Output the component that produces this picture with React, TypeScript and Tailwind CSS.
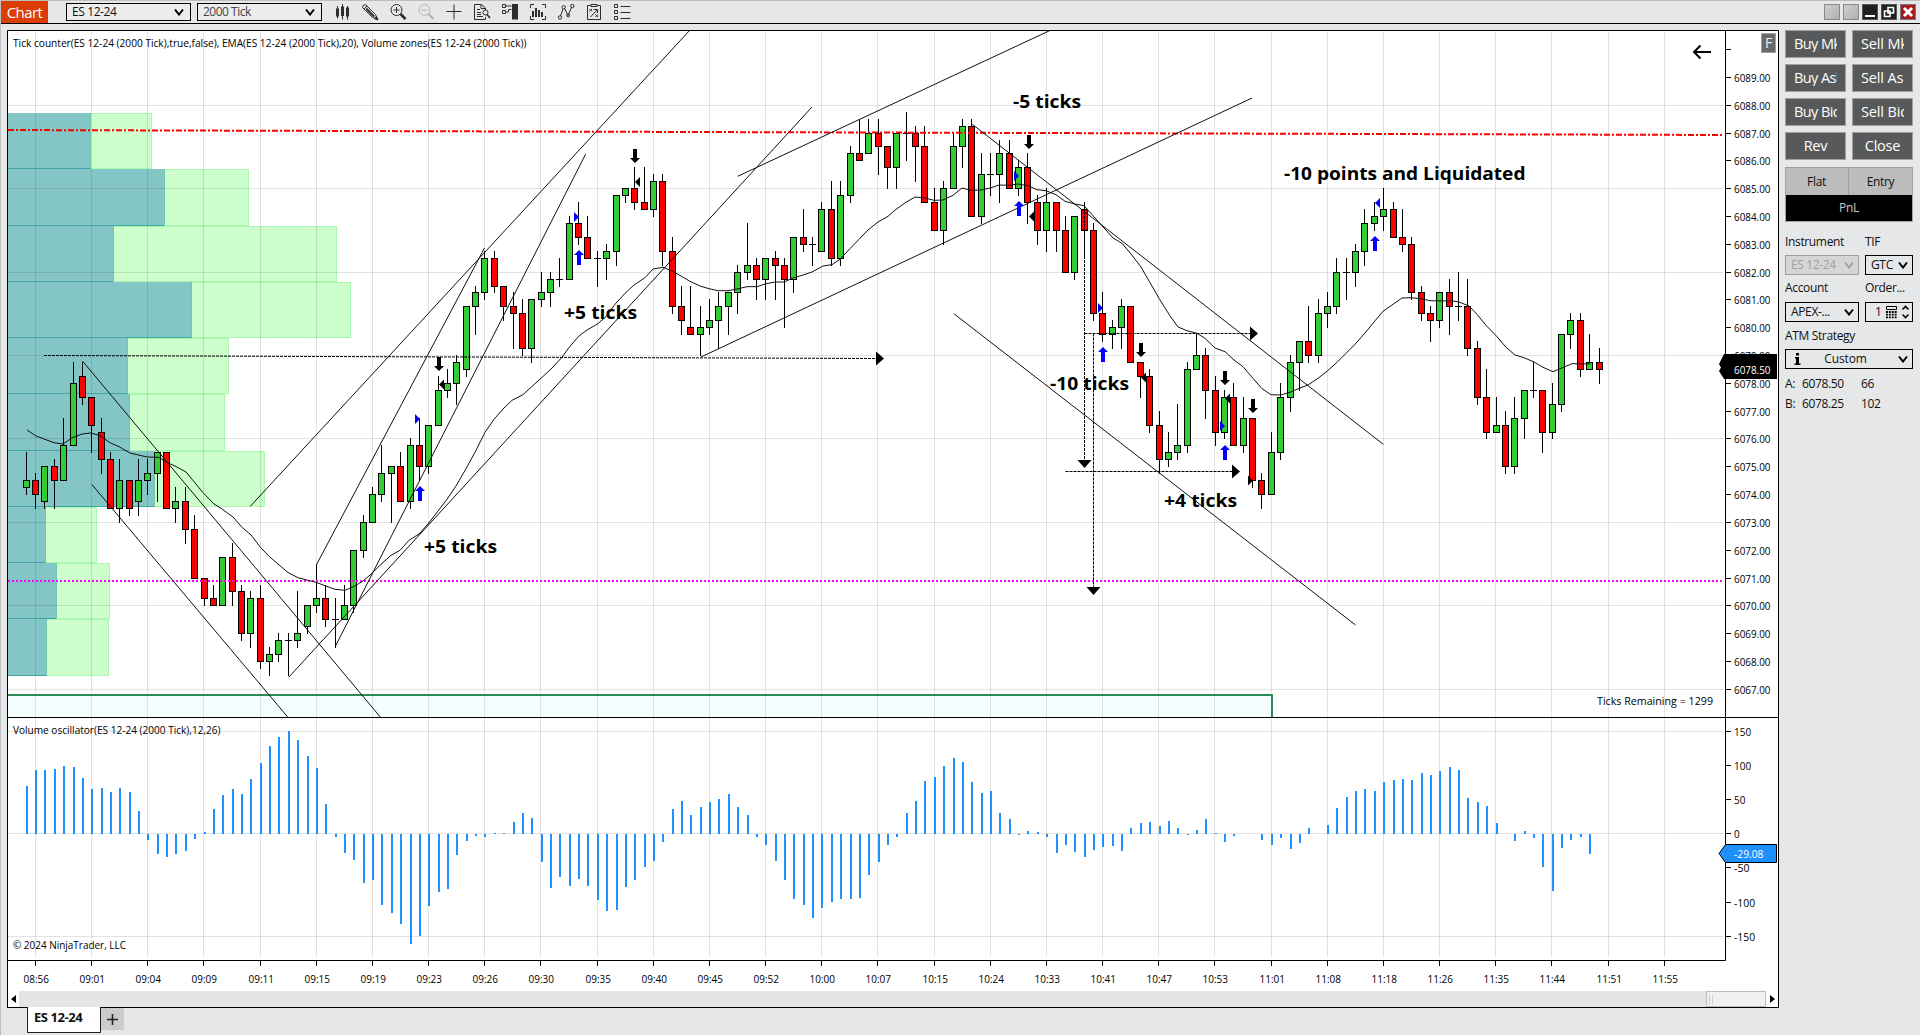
import { ReactNode } from 'react'

// [open, high, low, close] in ticks (0.25) above 6067.00
const candles = [
  [29, 34, 28, 30], [30, 31, 26, 28], [27, 32, 26, 32], [32, 33, 26, 30], [30, 39, 30, 35], [35, 47, 35, 44],
  [45, 47, 41, 42], [42, 42, 34, 38], [37, 39, 31, 33], [33, 34, 26, 26], [26, 33, 24, 30], [30, 30, 25, 26],
  [27, 33, 25, 30], [30, 33, 28, 31], [31, 34, 27, 34], [34, 34, 26, 26], [26, 29, 24, 27], [27, 29, 21, 23],
  [23, 25, 16, 16], [16, 16, 12, 13], [13, 15, 12, 12], [12, 19, 12, 19], [19, 21, 12, 14], [14, 15, 7, 8],
  [8, 14, 6, 13], [13, 15, 3, 4], [4, 6, 2, 5], [5, 8, 4, 7], [7, 8, 2, 7], [7, 14, 6, 8],
  [9, 12, 8, 12], [12, 18, 11, 13], [13, 15, 9, 10], [10, 13, 6, 10], [10, 15, 10, 12], [12, 20, 11, 20],
  [20, 25, 19, 24], [24, 29, 24, 28], [28, 35, 27, 31], [31, 32, 24, 32], [32, 34, 27, 27], [27, 36, 26, 35],
  [35, 39, 30, 32], [32, 38, 31, 38], [38, 45, 38, 43], [43, 46, 42, 44], [44, 48, 41, 47], [46, 55, 45, 55],
  [55, 58, 51, 57], [57, 63, 56, 62], [62, 63, 57, 58], [58, 58, 53, 55], [55, 57, 49, 54], [54, 56, 48, 49],
  [49, 56, 47, 56], [56, 60, 55, 57], [57, 60, 55, 59], [59, 62, 58, 59], [59, 68, 59, 67], [67, 70, 64, 65],
  [65, 68, 62, 62], [62, 63, 58, 62], [62, 64, 59, 63], [63, 71, 61, 71], [71, 72, 70, 72], [72, 75, 69, 70],
  [70, 75, 69, 69], [69, 74, 68, 73], [73, 74, 61, 63], [63, 65, 54, 55], [55, 58, 51, 53], [52, 58, 51, 51],
  [51, 55, 48, 52], [52, 56, 51, 53], [53, 57, 49, 55], [55, 57, 51, 57], [57, 61, 54, 60], [60, 67, 59, 61],
  [61, 62, 56, 59], [59, 62, 56, 62], [62, 63, 56, 61], [61, 62, 52, 59], [59, 65, 57, 65], [65, 69, 63, 64],
  [64, 65, 61, 64], [63, 70, 63, 69], [69, 73, 61, 62], [62, 73, 61, 71], [71, 78, 70, 77], [77, 82, 76, 76],
  [77, 82, 77, 80], [80, 82, 74, 78], [78, 78, 72, 75], [75, 80, 72, 80], [80, 83, 76, 80], [80, 81, 73, 78],
  [78, 81, 70, 70], [70, 72, 66, 66], [66, 73, 64, 72], [72, 80, 72, 78], [78, 82, 75, 81], [81, 82, 68, 68],
  [68, 77, 67, 74], [74, 77, 71, 74], [74, 79, 70, 77], [77, 79, 72, 72], [72, 76, 71, 75], [75, 77, 67, 70],
  [70, 71, 64, 66], [66, 72, 63, 70], [70, 70, 63, 66], [66, 68, 60, 60], [60, 68, 59, 68], [69, 70, 62, 66],
  [66, 67, 53, 54], [54, 57, 50, 51], [51, 53, 49, 52], [52, 56, 49, 55], [55, 55, 47, 47], [47, 47, 42, 45],
  [45, 46, 37, 38], [38, 40, 31, 33], [33, 37, 32, 34], [34, 41, 33, 35], [35, 47, 34, 46], [46, 51, 46, 48],
  [48, 49, 39, 43], [43, 45, 35, 37], [37, 43, 36, 42], [42, 44, 35, 35], [35, 42, 34, 39], [39, 39, 29, 30],
  [30, 31, 26, 28], [28, 37, 28, 34], [34, 44, 33, 42], [42, 48, 40, 47], [47, 50, 43, 50], [50, 55, 47, 48],
  [48, 56, 47, 54], [54, 57, 52, 55], [55, 62, 54, 60], [60, 62, 56, 60], [60, 64, 58, 63], [63, 69, 61, 67],
  [67, 70, 66, 68], [68, 72, 66, 69], [69, 70, 65, 65], [65, 69, 63, 64], [64, 65, 56, 57], [57, 58, 53, 54],
  [54, 55, 50, 53], [53, 57, 52, 57], [57, 59, 51, 55], [55, 60, 53, 55], [55, 59, 48, 49], [49, 50, 41, 42],
  [42, 46, 36, 37], [37, 42, 37, 38], [38, 40, 31, 32], [32, 42, 31, 39], [39, 43, 36, 43], [43, 47, 42, 43],
  [43, 43, 34, 37], [37, 44, 36, 41], [41, 51, 40, 51], [51, 54, 49, 53], [53, 54, 45, 46], [46, 51, 46, 47],
  [47, 49, 44, 46],
]

// oscillator bar heights, px from the zero line
const volume = [
  48, 64, 64, 65, 68, 67, 56, 45, 46, 42, 46, 42, 23, -6, -20, -23, -20, -17, -5, 2, 25, 39, 45, 40, 55, 71, 88, 97,
  103, 94, 78, 66, 30, -3, -19, -26, -49, -46, -71, -79, -90, -110, -102, -72, -58, -55, -21, -7, -2, -3, 1, 1, 12,
  21, 16, -28, -54, -43, -52, -45, -52, -66, -77, -76, -53, -46, -33, -27, -8, 25, 33, 19, 27, 32, 35, 40, 27, 19,
  -3, -11, -27, -46, -65, -71, -84, -74, -68, -65, -65, -64, -41, -28, -11, -3, 21, 33, 53, 57, 68, 76, 72, 52, 41,
  43, 21, 15, -1, 3, 2, -3, -19, -11, -18, -23, -16, -13, -12, -17, 6, 11, 12, 8, 13, 6, -1, 4, 15, 1, -8, -2, 0, 0,
  -6, -11, -4, -15, -9, 6, 0, 9, 26, 37, 43, 45, 43, 52, 54, 55, 54, 61, 59, 63, 67, 64, 36, 32, 28, 11, 0, -7, 3,
  -4, -33, -57, -14, -6, -3, -20,
]

const ema =
  '27,430 36,436 54,442.7 63,444 72,438 82,434 91,433 100,435.7 110,442.7 119,446.7 130,453 147,457 159,457.3 166,462 175,466 186,472 194,481.7 203,492.7 214,504 222,509 233,517 242,527.3 251,535 260,546.7 269,556.3 278,564 288,572.5 298,577.7 316,582.3 325,585.7 335,589.3 345,590.3 353,587 363,581 372,573.3 381,564.3 391,555.3 400,550.3 409,540.3 419,534 428,524 438,511 447,499.3 456,486 466,468.7 475,452.3 485,432.3 494,419.3 503,409 512,400.3 523,394.7 531,387.3 541,378.3 550,370 562,357.3 569,347.5 579,336 587,330 597,324.3 606,316.7 615,304.3 625,293.3 634,285 645,277.7 653,269 663,267.3 672,271 681,276 690,281.3 700,286 709,288.7 718,290.7 728,290.7 737,289 747,286.7 757,286.7 765,284 775,282 784,282 793,278 803,275 812,272 823,266 832,264.7 840,259.3 850,248.6 859,239.3 868,230 878,222 888,216.3 896,209.3 906,202.3 915,197 925,198 934,200.3 943,200 953,195.3 962,188 971,190.3 981,190 990,188 999,185 1009,185.3 1018,184 1028,185.7 1037,189.7 1046,190.7 1056,194.7 1065,201.3 1075,204 1084,205.7 1093,215.7 1102,225.7 1113,238 1122,243.3 1131,254 1141,267 1150,282.7 1159,298.3 1169,314.3 1178,327 1187,330.7 1197,333.3 1205,338.3 1215,348 1225,351.7 1234,360 1243,366.7 1253,378.3 1262,388.7 1271,394.7 1281,395 1290,392.3 1300,388 1308,385 1318,378.3 1327,371.3 1337,362.3 1346,353.3 1355,344.3 1365,333 1374,322 1383,311.3 1393,304.3 1402,298 1411,297.7 1421,298.7 1430,300.7 1453,301 1459,302 1469,306 1477,314.3 1486,325.3 1497,336.7 1506,347.3 1515,355 1524,357.7 1534,362 1543,367.3 1553,371.7 1561,368.3 1572,363.7 1590,364'

const times = [
  '08:56', '09:01', '09:04', '09:09', '09:11', '09:15', '09:19', '09:23', '09:26', '09:30', '09:35', '09:40', '09:45',
  '09:52', '10:00', '10:07', '10:15', '10:24', '10:33', '10:41', '10:47', '10:53', '11:01', '11:08', '11:18', '11:26',
  '11:35', '11:44', '11:51', '11:55',
]

// right edges of the two halves of each volume zone
const zones = [
  [91, 152], [165, 249], [114, 337], [192, 351], [128, 229], [130, 225], [155, 265], [46, 97], [57, 110], [47, 109],
]

const trendLines = [
  [82.7, 361.3, 380.3, 717],
  [91.7, 484.3, 287.7, 717],
  [250.3, 506.3, 690, 30],
  [316.3, 565, 484.5, 248],
  [335.5, 646, 585.7, 154],
  [288.7, 677.3, 812, 107],
  [737.7, 176.3, 1051, 30],
  [701, 357, 1252, 98],
  [972.3, 124.3, 1383.3, 444.3],
  [954, 313.8, 1355.5, 625],
]

const notes: [string, number, number, number][] = [
  ['+5 ticks', 424, 552.5, 73],
  ['+5 ticks', 564, 319, 73],
  ['-5 ticks', 1013, 108.3, 68],
  ['-10 ticks', 1050, 389.5, 79],
  ['+4 ticks', 1164, 507, 73],
  ['-10 points and Liquidated', 1284, 179.5, 241.5],
]

const upArrows = [[420, 486], [579, 250], [1019, 201], [1103, 347], [1225, 445], [1375, 236]]
const downArrows = [[439, 371], [635, 163], [1029, 149], [1141, 357], [1225, 385], [1253, 413]]

// x of the vertical edge, y of the tip, direction, color
const fills: [number, number, number, string][] = [
  [415, 419, 5, '#00f'], [574, 217, 5, '#00f'], [1014, 176, 5, '#00f'], [1098, 308, 5, '#00f'], [1220, 426, 5, '#00f'],
  [1380, 203, -5, '#00f'], [444, 384.5, -5, '#000'], [640, 182, -5, '#000'], [1034, 216.5, -5, '#000'],
  [1146, 377.5, -5, '#000'], [1230, 398.5, -5, '#000'], [1248, 480.5, 5, '#000'],
]

const barX = (n: number) => Math.floor(26.2 + n * 9.362)
const gridX = (i: number) => Math.floor(35.4 + i * 56.17) + 0.5
const tickY = (t: number) => Math.floor(689.3 - t * 6.953) + 0.5

function Fit({ x, y, w, children, size = 11, fill = '#000', bold = false }: { x: number, y: number, w: number, children: ReactNode, size?: number, fill?: string, bold?: boolean }) {
  return (
    <text x={x} y={y} textLength={w} lengthAdjust="spacingAndGlyphs" fontSize={size} fill={fill} fontWeight={bold ? 700 : 400}>{children}</text>
  )
}

function Candle({ n, data }: { n: number, data: number[] }) {
  const [o, h, l, c] = data
  const x = barX(n) + 0.5
  const top = tickY(Math.max(o, c))
  const bottom = tickY(Math.min(o, c))
  return (
    <g stroke="#000">
      <line x1={x} x2={x} y1={tickY(h) - 0.5} y2={tickY(l) + 0.5} />
      {o === c
        ? <line x1={x - 3.5} x2={x + 3.5} y1={top} y2={top} />
        : <rect x={x - 3} y={top} width={6} height={bottom - top} fill={c > o ? '#32cd32' : '#f00'} />}
    </g>
  )
}

function Chart() {
  return (
    <svg width={1772} height={961} viewBox="7 30 1772 961" className="block" fontFamily='"Open Sans", "Noto Sans", sans-serif'>
      <rect x={7} y={30} width={1772} height={961} fill="#fff" />

      {zones.map(([a, b], i) => {
        const y = Math.round(113.2 + i * 56.25)
        const h = Math.round(113.2 + (i + 1) * 56.25) - y
        return (
          <g key={i}>
            <rect x={8} y={y} width={a - 8} height={h} fill="#84c6c6" />
            <rect x={a} y={y} width={b - a} height={h} fill="#ccffcc" />
            <path d={`M${a} ${y + 0.5}H${b - 0.5}V${y + h - 0.5}H${a}`} fill="none" stroke="#aaf7ae" />
            <path d={`M8 ${y + h - 0.5}H${a}`} stroke="#3fa6a8" />
            <path d={`M${a - 0.5} ${y}V${y + h}`} stroke="#6fc9a8" />
          </g>
        )
      })}

      <rect x={8} y={695} width={1264} height={22} fill="#f3ffff" />
      <g stroke="#000" strokeOpacity={0.11}>
        {times.map((t, i) => <line key={t} x1={gridX(i)} x2={gridX(i)} y1={31} y2={957} />)}
        {[0, 12, 24, 36, 48, 60, 72, 84].map((t) => <line key={t} x1={8} x2={1724} y1={tickY(t)} y2={tickY(t)} />)}
        {[731.5, 833.5, 936.5].map((y) => <line key={y} x1={8} x2={1724} y1={y} y2={y} />)}
      </g>
      <path d="M8 695H1272V717" fill="none" stroke="#2e8b57" strokeWidth={2} />

      {candles.map((c, i) => <Candle key={i} n={i} data={c} />)}

      <line x1={8} y1={130} x2={1722} y2={135} stroke="#f00" strokeWidth={2} strokeDasharray="6 2 2 2" />
      <line x1={8} y1={581} x2={1722} y2={581} stroke="#f0f" strokeWidth={2} strokeDasharray="2 2" />

      <g stroke="#111" fill="none">
        <polyline points={ema} />
        {trendLines.map(([x1, y1, x2, y2], i) => <line key={i} x1={x1} y1={y1} x2={x2} y2={y2} />)}
      </g>
      <g stroke="#000" strokeDasharray="3 1">
        <line x1={44} y1={355.5} x2={876} y2={358.5} />
        <line x1={1084.5} y1={333.5} x2={1250} y2={333.5} />
        <line x1={1065.5} y1={471.5} x2={1232} y2={471.5} />
        <line x1={1084.5} y1={208} x2={1084.5} y2={460} />
        <line x1={1093.5} y1={333.5} x2={1093.5} y2={587} />
      </g>
      <path d="M876 351.5l8 7-8 7zM1250 326.5l8 7-8 7zM1232 464.5l8 7-8 7zM1077.5 460h14l-7 8zM1086.5 587h14l-7 8z" />

      {fills.map(([x, y, d, color], i) => <path key={i} d={`M${x} ${y - 5}l${d} 5l${-d} 5z`} fill={color} />)}
      {upArrows.map(([x, y], i) => <path key={i} d={`M${x} ${y}l5 5h-3v10h-4v-10h-3z`} fill="#00f" />)}
      {downArrows.map(([x, y], i) => <path key={i} d={`M${x} ${y}l5 -5h-3v-9h-4v9h-3z`} />)}

      {volume.map((v, i) => v !== 0 && (
        <rect key={i} x={barX(i)} y={v > 0 ? 834 - v : 834} width={2} height={Math.abs(v)} fill="#1e90ff" />
      ))}

      {notes.map(([text, x, y, w], i) => <Fit key={i} x={x} y={y} w={w} size={17.5} bold>{text}</Fit>)}
      <Fit x={13} y={47} w={513.5}>Tick counter(ES 12-24 (2000 Tick),true,false), EMA(ES 12-24 (2000 Tick),20), Volume zones(ES 12-24 (2000 Tick))</Fit>
      <Fit x={13} y={733.5} w={207.5}>Volume oscillator(ES 12-24 (2000 Tick),12,26)</Fit>
      <Fit x={13} y={948.5} w={113}>© 2024 NinjaTrader, LLC</Fit>
      <Fit x={1597} y={705} w={116}>Ticks Remaining = 1299</Fit>
      <path d="M1694 52H1711M1700.5 45.5L1694 52l6.5 6.5" fill="none" stroke="#000" strokeWidth={2} />

      {/* axes */}
      <path d="M7.5 991V30.5H1778.5V991M7 717.5H1778M7 960.5H1725.5V30" fill="none" stroke="#000" />
      {times.map((t, i) => (
        <g key={t}>
          <line x1={gridX(i)} x2={gridX(i)} y1={961} y2={966} stroke="#000" />
          <Fit x={gridX(i) - 12} y={983} w={25.5}>{t}</Fit>
        </g>
      ))}
      <line x1={1726} x2={1731} y1={49.5} y2={49.5} stroke="#000" />
      {Array.from({ length: 23 }, (_, i) => (
        <g key={i}>
          <line x1={1726} x2={1731} y1={tickY(i * 4)} y2={tickY(i * 4)} stroke="#000" />
          <Fit x={1734} y={tickY(i * 4) + 4} w={36.5}>{(6067 + i).toFixed(2)}</Fit>
        </g>
      ))}
      {[150, 100, 50, 0, -50, -100, -150].map((v) => {
        const y = Math.floor(833.8 - v * 0.683) + 0.5
        return (
          <g key={v}>
            <line x1={1726} x2={1731} y1={y} y2={y} stroke="#000" />
            <Fit x={1734} y={y + 4} w={String(Math.abs(v)).length * 5.7 + (v < 0 ? 4 : 0)}>{v}</Fit>
          </g>
        )
      })}

      <path d="M1724 354H1777V379H1724L1719 371l2-3.5-2-3.5z" />
      <Fit x={1734} y={374} w={36.5} fill="#fff">6078.50</Fit>
      <path d="M1725.5 844.5H1776.5V862.5H1725.5L1719 853.5z" fill="#1e90ff" stroke="#000" />
      <Fit x={1734} y={858} w={29.5} fill="#fff">-29.08</Fit>

      <rect x={1761.5} y={33.5} width={14} height={19} fill="#696969" stroke="#a0a0a0" />
      <text x={1765} y={48} fontSize={14} fill="#eee">F</text>
    </svg>
  )
}

function Icon({ children, color = '#2d2d2d' }: { children: ReactNode, color?: string }) {
  return <svg width={28} height={20} viewBox="0 0 28 20" fill="none" stroke={color}>{children}</svg>
}

function Chevron({ color = '#000' }: { color?: string }) {
  return (
    <svg width={10} height={8} viewBox="0 0 10 8" className="shrink-0">
      <path d="M1 1.5L5 6.5L9 1.5" fill="none" stroke={color} strokeWidth={2} />
    </svg>
  )
}

function Toolbar() {
  return (
    <div className="flex h-6 items-start border-t border-b border-t-[#bdbec0] border-b-black">
      <div className="flex h-[22px] w-[47px] items-center justify-center bg-[#dc3c05] text-[15px] tracking-[-0.55px] text-white">Chart</div>
      <div className="mt-[2px] ml-[18px] flex h-[18px] w-[125px] items-center justify-between border border-black bg-[#ececec] pr-1.5 pl-[5px] text-[12px] tracking-[-0.4px]">ES 12-24<Chevron /></div>
      <div className="mt-[2px] ml-[6px] flex h-[18px] w-[125px] items-center justify-between border border-black bg-[#ececec] pr-1.5 pl-[5px] text-[12px] tracking-[-0.5px] text-[#44444c]">2000 Tick<Chevron /></div>
      <div className="mt-px ml-[6px] flex">
        <Icon>
          <path d="M9.5 4v12.5M14.5 2v15.5M19.5 4v13.5" />
          <path d="M9.5 6.5v8M14.5 4.5v9.5M19.5 5.5v9" strokeWidth={3} />
        </Icon>
        <Icon>
          <path d="M7 3.5L9.5 2.5L19.5 12.5L21.5 17.5L16.5 15.5L6.5 5.5zM8 7L11 4M10 5.5L18.5 14.5" />
          <path d="M10.5 7L18 14.5" strokeWidth={2} />
          <path d="M22 18l-3.5-1.5 2-2z" fill="#2d2d2d" />
        </Icon>
        <Icon>
          <circle cx={12.5} cy={8} r={5.5} />
          <path d="M9.5 8h6M12.5 5v6" />
          <path d="M16.5 12l5 5" strokeWidth={2.6} />
        </Icon>
        <Icon color="#b4b4b4">
          <circle cx={12.5} cy={8} r={5.5} />
          <path d="M9.5 8h6" />
          <path d="M16.5 12l5 5" strokeWidth={2.2} />
        </Icon>
        <Icon><path d="M6.5 9.5h15M14 2.5v15" /></Icon>
        <Icon>
          <path d="M17.5 8V6L13.5 2.5H6.5V17.5H17.5V15M13 2.5V6.5H17.5M9 7.5h3M9 10.5h4M9 12.5h4M9 14.5h6" />
          <circle cx={17.5} cy={10.5} r={2.5} />
          <path d="M19 12.5l3 3.5" strokeWidth={1.6} />
        </Icon>
        <Icon>
          <path d="M6.5 2.5h3v3h-3zM6.5 8.5h3v3h-3zM9.5 4h6M9.5 10h3V7.5h3" />
          <path d="M16 2h6v15.5h-6z" fill="#2d2d2d" stroke="none" />
        </Icon>
        <Icon>
          <path d="M10 2.5H6.5V6M18 2.5H21.5V6M10 17.5H6.5V14M18 17.5H21.5V14" />
          <path d="M9 9v6M12 6v9M15 8v7M18 10v5" strokeWidth={2} />
        </Icon>
        <Icon>
          <path d="M8.5 14L11 7M12.5 6.5L16 13.5L19.5 5.5" />
          <circle cx={8} cy={15.5} r={1.7} />
          <circle cx={11.7} cy={5.3} r={1.7} />
          <circle cx={16.2} cy={13.5} r={1.5} />
          <circle cx={20.3} cy={4} r={1.7} />
        </Icon>
        <Icon>
          <path d="M11 3.5H7.5V17.5H20.5V3.5H17M11 2.5h6v2h-6z" />
          <path d="M9.5 7l2.5 2.5M12 7l-2.5 2.5M15.5 12.5l2.5 2.5M18 12.5l-2.5 2.5M10.5 15l6.5-7M13.5 7.5H17.5V11" />
        </Icon>
        <Icon>
          <path d="M6.5 2.5h3v3h-3zM6.5 8.5h3v3h-3zM6.5 14.5h3v3h-3zM12.5 4.5h10M12.5 10.5h10M12.5 16.5h10" />
        </Icon>
      </div>
      <div className="mt-[3px] mr-1 ml-auto flex gap-[3px]">
        <div className="size-4 border border-[#8a8a8a] bg-linear-to-br from-[#cfcfcf] to-[#b0b0b0]" />
        <div className="size-4 border border-[#8a8a8a] bg-linear-to-br from-[#cfcfcf] to-[#b0b0b0]" />
        <div className="size-4 border border-[#555] bg-[#231f20]">
          <svg width={14} height={14}><path d="M2 11h10" stroke="#fff" strokeWidth={2} /></svg>
        </div>
        <div className="size-4 border border-[#555] bg-[#231f20]">
          <svg width={14} height={14} fill="#231f20" stroke="#fff" strokeWidth={1.6}><path d="M6 2.5h5.5v5.5H6zM2.5 6h5.5v5.5H2.5z" /></svg>
        </div>
        <div className="size-4 border border-[#777] bg-[#a5191f]">
          <svg width={14} height={14}><path d="M3 3l8 8M11 3l-8 8" stroke="#fff" strokeWidth={3} /></svg>
        </div>
      </div>
    </div>
  )
}

// long captions are cut by the button's padding
function OrderButton({ children, clip = '' }: { children: ReactNode, clip?: string }) {
  return (
    <div className="flex h-7 w-[61px] items-center border border-[#a0a0a0] bg-[#58595b] px-[8px] text-[14.5px] text-white">
      <div className={clip ? `overflow-hidden whitespace-nowrap ${clip}` : 'w-full text-center tracking-[-0.2px]'}>{children}</div>
    </div>
  )
}

const buyClip = 'w-[43px] tracking-[-0.6px]'
const sellClip = 'w-[43px] tracking-[-0.15px]'
const selectClass = 'flex h-5 items-center justify-between border border-black pr-1 pl-[5px]'

function OrderPanel() {
  return (
    <div className="mt-[6px] ml-[6px] w-32 text-[12px] leading-4 tracking-[-0.35px] text-[#111]">
      <div className="grid grid-cols-2 gap-x-[6px] gap-y-[6px]">
        <OrderButton clip={buyClip}>Buy Mkt</OrderButton>
        <OrderButton clip={sellClip}>Sell Mkt</OrderButton>
        <OrderButton clip={buyClip}>Buy Ask</OrderButton>
        <OrderButton clip={sellClip}>Sell Ask</OrderButton>
        <OrderButton clip={buyClip}>Buy Bid</OrderButton>
        <OrderButton clip={sellClip}>Sell Bid</OrderButton>
        <OrderButton>Rev</OrderButton>
        <OrderButton>Close</OrderButton>
      </div>
      <div className="mt-[7px] border border-[#a0a0a0] text-center">
        <div className="flex h-[27px] items-center bg-[#bcbcbc]">
          <div className="flex h-full w-[63px] items-center justify-center border-r border-[#a0a0a0] pr-px">Flat</div>
          <div className="flex-1">Entry</div>
        </div>
        <div className="flex h-[26px] items-center justify-center bg-black text-[#ccc]">PnL</div>
      </div>

      <div className="mt-3 flex">
        <div className="w-20">Instrument</div>
        <div>TIF</div>
      </div>
      <div className="mt-[5px] flex justify-between">
        <div className="flex h-5 w-[74px] items-center justify-between border border-[#a0a0a0] bg-[#d6d6d6] pr-1 pl-[5px] text-[#a0a0a0]">ES 12-24<Chevron color="#a0a0a0" /></div>
        <div className={`${selectClass} w-12`}>GTC<Chevron /></div>
      </div>
      <div className="mt-[5px] flex">
        <div className="w-20">Account</div>
        <div>Order...</div>
      </div>
      <div className="mt-[6px] flex justify-between">
        <div className={`${selectClass} w-[74px]`}>APEX-...<Chevron /></div>
        <div className="flex h-5 w-12 items-center justify-between border border-black pr-[2px] pl-[9px]">
          1
          <svg width={25} height={14} viewBox="0 0 25 14">
            <path d="M1.5 1.5h10v3h-10z" fill="none" stroke="#000" />
            <path d="M1 7h11M1 9.7h11M1 12.4h11" stroke="#000" strokeWidth={1.8} strokeDasharray="1.9 1" />
            <path d="M17.5 4.5l3-3 3 3M17.5 9.5l3 3 3-3" fill="none" stroke="#000" strokeWidth={1.6} />
          </svg>
        </div>
      </div>
      <div className="mt-[6px]">ATM Strategy</div>
      <div className="mt-[5px] flex h-5 items-center border border-black pr-1 pl-2">
        <svg width={7} height={12} viewBox="0 0 7 12"><path d="M2 0h3v2.4H2zM1 4h4v6.5h1.5V12H.5v-1.5H2v-5H1z" /></svg>
        <span className="flex-1 pr-2 text-center tracking-[-0.1px]">Custom</span>
        <Chevron />
      </div>
      <div className="mt-[7px] flex h-5">
        <div className="w-[17px]">A:</div>
        <div className="w-[59px]">6078.50</div>
        <div>66</div>
      </div>
      <div className="flex h-5">
        <div className="w-[17px]">B:</div>
        <div className="w-[59px]">6078.25</div>
        <div>102</div>
      </div>
    </div>
  )
}

export default function App() {
  return (
    <div className="h-[1035px] w-[1920px] overflow-hidden border-l border-[#bdbec0] bg-[#e6e7e8] font-['Open_Sans','Noto_Sans',sans-serif] text-[#111]">
      <Toolbar />
      <div className="flex">
        <div className="mt-[6px] ml-[6px] w-[1772px]">
          <Chart />
          <div className="flex h-[17px] items-stretch border-x border-b border-black bg-[#e5e5e5]">
            <div className="flex w-[11px] items-center justify-center bg-white">
              <svg width={5} height={8}><path d="M5 0v8L0 4z" /></svg>
            </div>
            <div className="ml-auto flex w-[60px] items-center gap-[2px] border border-[#bcbcbc] bg-[#f1f1f1] pl-[2px]">
              <div className="h-2.5 w-px bg-[#d0d0d0]" />
              <div className="h-2.5 w-px bg-[#d0d0d0]" />
            </div>
            <div className="flex w-[12px] items-center justify-center bg-white">
              <svg width={5} height={8}><path d="M0 0v8l5-4z" /></svg>
            </div>
          </div>
          <div className="-mt-px flex items-start pl-5">
            <div className="h-[26px] w-[74px] border-x border-b border-[#222] bg-white pl-[6px] text-[13px] leading-[20px] font-bold tracking-[-0.45px]">ES 12-24</div>
            <div className="mt-px flex h-[22px] w-[23px] items-center justify-center bg-[#cbcbcb]">
              <svg width={11} height={11}><path d="M0 5.5h11M5.5 0v11" stroke="#222" strokeWidth={1.6} /></svg>
            </div>
          </div>
        </div>
        <OrderPanel />
      </div>
    </div>
  )
}
